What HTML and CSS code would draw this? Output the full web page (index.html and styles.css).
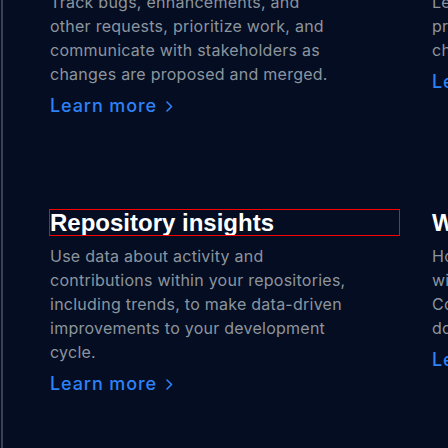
FILE: index.html
```html
<!DOCTYPE html>
<html lang="en">
<head>
<meta charset="utf-8">
<title>Features</title>
<link rel="stylesheet" href="styles.css">
</head>
<body>
<div class="page">
  <div class="grid">
    <article class="card">
      <p class="desc">Track bugs, enhancements, and other requests, prioritize work, and communicate with stakeholders as changes are proposed and merged.</p>
      <a class="more" href="#">Learn more <svg class="chev" width="7" height="11" viewBox="0 0 7 11"><path d="M1 1l4.5 4.5L1 10" fill="none" stroke="currentColor" stroke-width="1.6" stroke-linecap="round" stroke-linejoin="round"/></svg></a>
    </article>
    <article class="card">
      <p class="desc">Let others know about changes<br>proposed to a branch, and review<br>changes before they are merged.</p>
      <a class="more" href="#">Learn more <svg class="chev" width="7" height="11" viewBox="0 0 7 11"><path d="M1 1l4.5 4.5L1 10" fill="none" stroke="currentColor" stroke-width="1.6" stroke-linecap="round" stroke-linejoin="round"/></svg></a>
    </article>
    <article class="card">
      <h3 class="title focused">Repository insights</h3>
      <p class="desc desc-wide">Use data about activity and contributions within your repositories, including trends, to make data-driven improvements to your development cycle.</p>
      <a class="more" href="#">Learn more <svg class="chev" width="7" height="11" viewBox="0 0 7 11"><path d="M1 1l4.5 4.5L1 10" fill="none" stroke="currentColor" stroke-width="1.6" stroke-linecap="round" stroke-linejoin="round"/></svg></a>
    </article>
    <article class="card">
      <h3 class="title">Wikis</h3>
      <p class="desc">Host documentation for your repo<br>within a wiki others can edit.<br>Collaborators can share<br>documentation.</p>
      <a class="more" href="#">Learn more <svg class="chev" width="7" height="11" viewBox="0 0 7 11"><path d="M1 1l4.5 4.5L1 10" fill="none" stroke="currentColor" stroke-width="1.6" stroke-linecap="round" stroke-linejoin="round"/></svg></a>
    </article>
  </div>
</div>
</body>
</html>
```

FILE: styles.css
```css
html, body {
  margin: 0;
  padding: 0;
  background: #040d21;
  height: 100%;
  overflow: hidden;
}

.page {
  margin-left: 1px;
  border-left: 2px solid #394254;
  padding-left: 47px;
  height: 100%;
  overflow: hidden;
}

.grid {
  display: grid;
  grid-template-columns: 349px 349px;
  column-gap: 33px;
  row-gap: 92px;
  margin-top: -10px;
  align-items: start;
}

.card {
  display: flex;
  flex-direction: column;
  align-items: flex-start;
}

.title {
  margin: 0 0 9px;
  font-family: "Liberation Sans", Arial, sans-serif;
  font-weight: 700;
  font-size: 24px;
  line-height: 25px;
  color: #ffffff;
  align-self: stretch;
}

.focused {
  outline: 1px solid #ff0000;
}

.desc {
  margin: 0;
  max-width: 287px;
  font-family: Inter, "Open Sans", sans-serif;
  font-size: 16px;
  line-height: 24px;
  letter-spacing: 0.25px;
  color: #8c959f;
}

.desc-wide {
  max-width: 304px;
}

.more {
  margin-top: 8px;
  display: inline-flex;
  align-items: center;
  gap: 9px;
  font-family: Inter, "Open Sans", sans-serif;
  font-weight: 500;
  font-size: 18px;
  line-height: 24px;
  letter-spacing: 0.9px;
  color: #2f81f7;
  text-decoration: none;
}

.chev {
  display: block;
}
```
